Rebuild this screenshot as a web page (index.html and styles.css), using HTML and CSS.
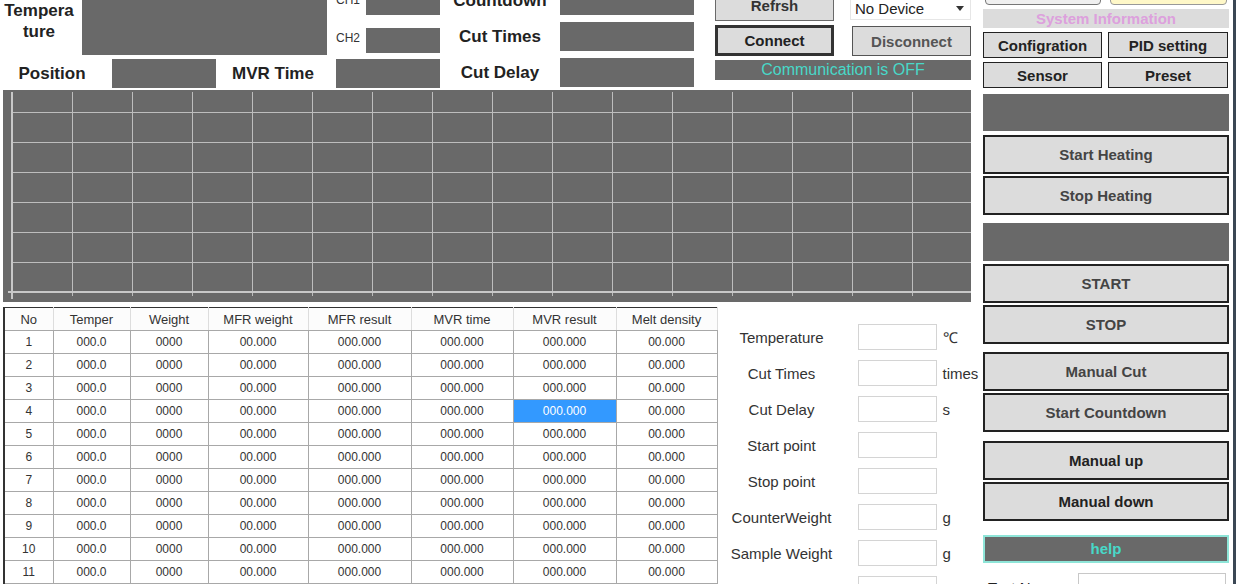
FILE: index.html
```html
<!DOCTYPE html>
<html lang="en">

<head>
    <meta charset="UTF-8">
    <meta name="viewport" content="width=device-width, initial-scale=1.0">
    <title>MFR Tester</title>
    <link rel="stylesheet" href="styles.css">
</head>
<body>
    <div class="app">
        <div class="main">
            <div class="top">
                <div class="grp-a">
                    <div class="row-temp">
                        <div class="big-label temp-label">Tempera<br>ture</div>
                        <div class="screen temp-screen"></div>
                    </div>
                    <div class="row-pos">
                        <div class="big-label pos-label">Position</div>
                        <div class="screen pos-screen"></div>
                        <div class="big-label mvr-label">MVR Time</div>
                    </div>
                </div>
                <div class="grp-b">
                    <div class="ch-row">
                        <span class="ch-label">CH1</span>
                        <div class="screen ch-screen"></div>
                    </div>
                    <div class="ch-row ch-second">
                        <span class="ch-label">CH2</span>
                        <div class="screen ch-screen"></div>
                    </div>
                    <div class="screen mvr-screen"></div>
                </div>
                <div class="grp-c">
                    <div class="count-row">
                        <div class="big-label count-label">Countdown</div>
                        <div class="screen count-screen"></div>
                    </div>
                    <div class="count-row">
                        <div class="big-label count-label">Cut Times</div>
                        <div class="screen count-screen"></div>
                    </div>
                    <div class="count-row">
                        <div class="big-label count-label">Cut Delay</div>
                        <div class="screen count-screen"></div>
                    </div>
                </div>
                <div class="grp-d">
                    <button class="btn btn-refresh">Refrsh</button>
                    <div class="device-select">
                        <span>No Device</span>
                        <span class="arrow"></span>
                    </div>
                    <button class="btn btn-connect">Connect</button>
                    <button class="btn btn-disconnect">Disconnect</button>
                    <div class="comm-status">Communication is OFF</div>
                </div>
            </div>

            <div class="chart">
                <svg width="968" height="212" viewBox="0 0 968 212">
                    <defs>
                        <pattern id="grid" x="9" y="22" width="60" height="30" patternUnits="userSpaceOnUse">
                            <line x1="0.5" y1="0" x2="0.5" y2="30" stroke="#bdbdbd" stroke-width="1"/>
                            <line x1="0" y1="0.5" x2="60" y2="0.5" stroke="#bdbdbd" stroke-width="1"/>
                        </pattern>
                    </defs>
                    <rect x="9" y="2" width="959" height="204" fill="url(#grid)"/>
                    <line x1="9" y1="2" x2="9" y2="209" stroke="#c8c8c8" stroke-width="2"/>
                    <line x1="5" y1="202" x2="968" y2="202" stroke="#c8c8c8" stroke-width="2"/>
                </svg>
            </div>

            <div class="bottom">
                <table class="results">
                    <colgroup>
                        <col style="width:49px">
                        <col style="width:77px">
                        <col style="width:78px">
                        <col style="width:100px">
                        <col style="width:103px">
                        <col style="width:102px">
                        <col style="width:103px">
                        <col style="width:101px">
                    </colgroup>
                    <thead>
                        <tr>
                            <th>No</th><th>Temper</th><th>Weight</th><th>MFR weight</th>
                            <th>MFR result</th><th>MVR time</th><th>MVR result</th><th>Melt density</th>
                        </tr>
                    </thead>
                    <tbody>
                        <tr><td>1</td><td>000.0</td><td>0000</td><td>00.000</td><td>000.000</td><td>000.000</td><td>000.000</td><td>00.000</td></tr>
                        <tr><td>2</td><td>000.0</td><td>0000</td><td>00.000</td><td>000.000</td><td>000.000</td><td>000.000</td><td>00.000</td></tr>
                        <tr><td>3</td><td>000.0</td><td>0000</td><td>00.000</td><td>000.000</td><td>000.000</td><td>000.000</td><td>00.000</td></tr>
                        <tr><td>4</td><td>000.0</td><td>0000</td><td>00.000</td><td>000.000</td><td>000.000</td><td class="selected">000.000</td><td>00.000</td></tr>
                        <tr><td>5</td><td>000.0</td><td>0000</td><td>00.000</td><td>000.000</td><td>000.000</td><td>000.000</td><td>00.000</td></tr>
                        <tr><td>6</td><td>000.0</td><td>0000</td><td>00.000</td><td>000.000</td><td>000.000</td><td>000.000</td><td>00.000</td></tr>
                        <tr><td>7</td><td>000.0</td><td>0000</td><td>00.000</td><td>000.000</td><td>000.000</td><td>000.000</td><td>00.000</td></tr>
                        <tr><td>8</td><td>000.0</td><td>0000</td><td>00.000</td><td>000.000</td><td>000.000</td><td>000.000</td><td>00.000</td></tr>
                        <tr><td>9</td><td>000.0</td><td>0000</td><td>00.000</td><td>000.000</td><td>000.000</td><td>000.000</td><td>00.000</td></tr>
                        <tr><td>10</td><td>000.0</td><td>0000</td><td>00.000</td><td>000.000</td><td>000.000</td><td>000.000</td><td>00.000</td></tr>
                        <tr><td>11</td><td>000.0</td><td>0000</td><td>00.000</td><td>000.000</td><td>000.000</td><td>000.000</td><td>00.000</td></tr>
                        <tr><td>12</td><td>000.0</td><td>0000</td><td>00.000</td><td>000.000</td><td>000.000</td><td>000.000</td><td>00.000</td></tr>
                    </tbody>
                </table>

                <div class="params">
                    <div class="field"><label>Temperature</label><input type="text"><span class="unit">℃</span></div>
                    <div class="field"><label>Cut Times</label><input type="text"><span class="unit">times</span></div>
                    <div class="field"><label>Cut Delay</label><input type="text"><span class="unit">s</span></div>
                    <div class="field"><label>Start point</label><input type="text"></div>
                    <div class="field"><label>Stop point</label><input type="text"></div>
                    <div class="field"><label>CounterWeight</label><input type="text"><span class="unit">g</span></div>
                    <div class="field"><label>Sample Weight</label><input type="text"><span class="unit">g</span></div>
                    <div class="field"><label>MFR</label><input type="text"></div>
                </div>
            </div>
        </div>

        <div class="side">
            <div class="tabs">
                <button class="tab">中文/EN</button>
                <button class="tab tab-yellow"></button>
            </div>
            <div class="sys-info">System Information</div>
            <div class="pair">
                <button class="btn side-btn dark-text">Configration</button>
                <button class="btn side-btn dark-text">PID setting</button>
            </div>
            <div class="pair">
                <button class="btn side-btn dark-text">Sensor</button>
                <button class="btn side-btn dark-text">Preset</button>
            </div>

            <div class="group group-heat">
                <div class="screen side-screen"></div>
                <button class="btn big-btn">Start Heating</button>
                <button class="btn big-btn">Stop Heating</button>
            </div>
            <div class="group">
                <div class="screen side-screen second"></div>
                <button class="btn big-btn">START</button>
                <button class="btn big-btn">STOP</button>
            </div>
            <div class="group">
                <button class="btn big-btn">Manual Cut</button>
                <button class="btn big-btn">Start Countdown</button>
            </div>
            <div class="group group-manual">
                <button class="btn big-btn dark-text">Manual up</button>
                <button class="btn big-btn dark-text">Manual down</button>
            </div>

            <div class="help">help</div>
            <div class="test-row">
                <label>Test No</label>
                <input type="text">
            </div>
        </div>
    </div>
</body>
</html>
```

FILE: styles.css
```css
* {
    box-sizing: border-box;
}

html {
    background-color: #ffffff;
}

body {
    margin: 0;
    padding: 0;
    width: 1236px;
    height: 584px;
    overflow: hidden;
    background-color: #ffffff;
    box-shadow: inset -3px 0 0 #3b4754;
    font-family: "Liberation Sans", Arial, sans-serif;
    color: #222;
}

.app {
    display: flex;
    margin-top: -20px;
}

.main {
    width: 980px;
    flex-shrink: 0;
}

.screen {
    background-color: #696969;
}

.big-label {
    font-size: 17px;
    font-weight: bold;
    color: #222;
    display: flex;
    align-items: center;
    justify-content: center;
    text-align: center;
}

/* top readouts */

.top {
    display: flex;
    height: 108px;
}

.grp-a {
    width: 336px;
    margin-top: 6px;
}

.row-temp {
    display: flex;
    height: 69px;
}

.temp-label {
    width: 78px;
    margin-right: 4px;
    line-height: 21px;
}

.temp-screen {
    width: 245px;
}

.row-pos {
    display: flex;
    height: 29px;
    margin-top: 4px;
}

.pos-label {
    width: 104px;
    margin-right: 8px;
}

.pos-screen {
    width: 104px;
}

.mvr-label {
    width: 114px;
}

.grp-b {
    width: 104px;
    margin-top: 10px;
}

.ch-row {
    display: flex;
    height: 25px;
    align-items: center;
}

.ch-second {
    margin-top: 13px;
}

.ch-label {
    width: 30px;
    font-size: 12px;
    color: #333;
    margin-top: -6px;
}

.ch-screen {
    width: 74px;
    height: 25px;
}

.mvr-screen {
    height: 29px;
    margin-top: 6px;
}

.grp-c {
    width: 254px;
    margin-top: 6px;
    display: flex;
    flex-direction: column;
    gap: 7px;
}

.count-row {
    display: flex;
    height: 29px;
}

.count-label {
    width: 120px;
}

.count-screen {
    width: 134px;
}

.grp-d {
    width: 256px;
    margin-left: 21px;
    margin-top: 10px;
    display: grid;
    grid-template-columns: 119px 121px;
    grid-template-rows: 31px 31px 20px;
    column-gap: 16px;
    row-gap: 4px;
}

.btn {
    font-family: "Liberation Sans", Arial, sans-serif;
    font-size: 15px;
    font-weight: bold;
    color: #444;
    background-color: #dcdcdc;
    border: 1px solid #222;
    padding: 0;
    margin: 0;
}

.btn-refresh {
    border-color: #6a6a6a;
    color: #333;
}

.device-select {
    height: 24px;
    margin-top: 6px;
    background-color: #fff;
    border: 1px solid #e6e6e6;
    display: flex;
    align-items: center;
    justify-content: space-between;
    padding: 0 6px 0 4px;
    font-size: 15px;
    color: #222;
}

.arrow {
    width: 0;
    height: 0;
    border-left: 4px solid transparent;
    border-right: 4px solid transparent;
    border-top: 5px solid #333;
}

.btn-connect {
    border: 3px solid #333;
    color: #222;
}

.btn-disconnect {
    margin-left: 2px;
    margin-top: 1px;
    border-color: #555;
    color: #555;
}

.comm-status {
    grid-column: 1 / 3;
    background-color: #696969;
    color: #48d8c8;
    font-size: 16px;
    line-height: 20px;
    text-align: center;
}

/* chart */

.chart {
    width: 968px;
    height: 212px;
    margin-left: 3px;
    margin-top: 2px;
    background-color: #696969;
}

.chart svg {
    display: block;
}

/* table and form */

.bottom {
    display: flex;
    margin-top: 5px;
}

.results {
    margin-left: 3px;
    width: 714px;
    table-layout: fixed;
    border-collapse: collapse;
    border: 1px solid #333;
    border-left: 2px solid #333;
    font-size: 12px;
    color: #333;
    align-self: flex-start;
}

.results th,
.results td {
    height: 23px;
    padding: 0;
    text-align: center;
    border: 1px solid #a8a8a8;
    white-space: nowrap;
}

.results th {
    font-weight: normal;
    font-size: 13px;
    background-color: #fcfcfc;
    border-top: none;
    border-left-color: #dddddd;
    border-right-color: #dddddd;
}

.results td.selected {
    background-color: #3399ff;
    color: #fff;
}

.params {
    margin-left: 3px;
    padding-top: 17px;
    display: flex;
    flex-direction: column;
    gap: 10px;
}

.field {
    display: flex;
    align-items: center;
    height: 26px;
    font-size: 15px;
    color: #333;
}

.field label {
    width: 122px;
    text-align: center;
}

.field input {
    width: 79px;
    height: 26px;
    margin-left: 15px;
    border: 1px solid #d4d4d4;
    background-color: #fff;
}

.unit {
    margin-left: 6px;
}

/* right column */

.side {
    width: 246px;
    margin-left: 3px;
    flex-shrink: 0;
    display: flex;
    flex-direction: column;
}

.tabs {
    display: flex;
    height: 25px;
    padding-left: 2px;
    gap: 9px;
}

.tab {
    width: 116px;
    height: 25px;
    border: 1px solid #777;
    border-radius: 4px;
    background-color: #f0f0f0;
    font-family: "Liberation Sans", "Noto Sans CJK SC", Arial, sans-serif;
    font-size: 15px;
    color: #222;
    padding: 0 0 6px 0;
}

.tab-yellow {
    width: 117px;
    background-color: #fff8c8;
    border-color: #999;
}

.sys-info {
    height: 19px;
    margin-top: 4px;
    background-color: #dcdcdc;
    color: #dda0dd;
    font-size: 15px;
    font-weight: bold;
    line-height: 19px;
    text-align: center;
}

.pair {
    display: grid;
    grid-template-columns: 119px 120px;
    column-gap: 6px;
    height: 26px;
    margin-top: 4px;
}

.side-btn {
    border: 1px solid #222;
}

.dark-text {
    color: #222;
}

.group {
    display: flex;
    flex-direction: column;
    gap: 2px;
    margin-top: 8px;
}

.group-heat {
    margin-top: 6px;
}

.group-manual {
    margin-top: 9px;
}

.side-screen {
    height: 37px;
    margin-bottom: 2px;
}

.side-screen.second {
    height: 38px;
    margin-bottom: 1px;
}

.big-btn {
    height: 39px;
    border: 2px solid #222;
}

.help {
    height: 28px;
    margin-top: 14px;
    background-color: #696969;
    border: 2px solid #8ee5d8;
    color: #48d8c8;
    font-size: 15px;
    font-weight: bold;
    line-height: 24px;
    text-align: center;
}

.test-row {
    display: flex;
    align-items: flex-start;
    margin-top: 10px;
    font-size: 15px;
    color: #222;
}

.test-row label {
    width: 95px;
    padding-left: 5px;
    margin-top: 6px;
}

.test-row input {
    width: 148px;
    height: 26px;
    border: 1px solid #c8c8c8;
}
```
